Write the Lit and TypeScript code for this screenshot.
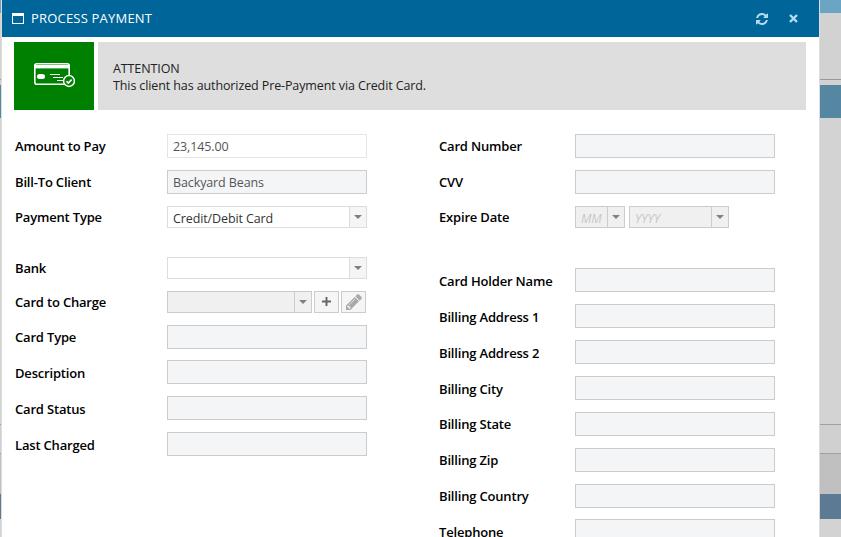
import { LitElement, html, css, svg } from "lit";
import { customElement } from "lit/decorators.js";

const bands = [
  { h: 13, c: "#6aa5c4" },
  { h: 66, c: "#d2d2d2" },
  { h: 1, c: "#999999" },
  { h: 5, c: "#d2d2d2" },
  { h: 33, c: "#5587a3" },
  { h: 306, c: "#d3d3d3" },
  { h: 1, c: "#a0a0a0" },
  { h: 28, c: "#d0d0d0" },
  { h: 1, c: "#a0a0a0" },
  { h: 40, c: "#c0c0c0" },
  { h: 25, c: "#5d7a95" },
  { h: 18, c: "#d3d3d3" },
];

const left = [
  { label: "Amount to Pay", kind: "plain", value: "23,145.00" },
  { label: "Bill-To Client", kind: "locked", value: "Backyard Beans" },
  { label: "Payment Type", kind: "select", value: "Credit/Debit Card" },
  { label: "Bank", kind: "select", value: "", cls: "after-gap" },
  { label: "Card to Charge", kind: "charge", value: "" },
  { label: "Card Type", kind: "locked", value: "" },
  { label: "Description", kind: "locked", value: "" },
  { label: "Card Status", kind: "locked", value: "" },
  { label: "Last Charged", kind: "locked", value: "" },
];

const right = [
  { label: "Card Number", kind: "locked", value: "" },
  { label: "CVV", kind: "locked", value: "" },
  { label: "Expire Date", kind: "expire", value: "" },
  { label: "Card Holder Name", kind: "locked", value: "", cls: "after-gap-wide" },
  { label: "Billing Address 1", kind: "locked", value: "" },
  { label: "Billing Address 2", kind: "locked", value: "" },
  { label: "Billing City", kind: "locked", value: "" },
  { label: "Billing State", kind: "locked", value: "" },
  { label: "Billing Zip", kind: "locked", value: "" },
  { label: "Billing Country", kind: "locked", value: "" },
  { label: "Telephone", kind: "locked", value: "" },
];

const cardIcon = svg`
  <rect x="1.8" y="1.8" width="34.4" height="20.4" rx="2" fill="none" stroke="#fff" stroke-width="1.6"/>
  <rect x="1" y="3" width="36" height="3.4" fill="#fff"/>
  <rect x="4" y="12" width="8" height="5" rx="2.5" fill="#fff"/>
  <path d="M17 12.5h10M20 15.5h10M24 18.5h6" stroke="#fff" stroke-width="1.2" fill="none"/>
  <circle cx="36" cy="19" r="5.4" fill="#008000" stroke="#fff" stroke-width="1.5"/>
  <path d="M33.5 19.2l1.8 1.8 3.3-3.4" stroke="#fff" stroke-width="1.6" fill="none"/>
`;

@customElement("app-root")
export class AppRoot extends LitElement {
  static styles = css`
    :host {
      display: block;
      width: 841px;
      height: 537px;
      overflow: hidden;
      font-family: "Open Sans", "Noto Sans", sans-serif;
      font-size: 12.5px;
      letter-spacing: -0.11px;
      background: #d3d3d3;
    }
    .screen {
      display: flex;
      height: 537px;
    }
    .strip-left {
      width: 2px;
      flex: none;
      display: flex;
      flex-direction: column;
      border-right: 1px solid #dcdcdc;
      box-sizing: border-box;
    }
    .strip-right {
      flex: 1;
      display: flex;
      flex-direction: column;
      border-left: 1px solid #dedede;
    }
    .band {
      flex: none;
    }
    .dialog {
      width: 817px;
      flex: none;
      background: #fff;
      overflow: hidden;
    }
    .titlebar {
      height: 37px;
      background: #006699;
      color: #fff;
      display: flex;
      align-items: center;
      padding: 0 21px 0 10px;
    }
    .titlebar .win {
      margin-right: 7px;
    }
    .titlebar h1 {
      margin: 0 0 2px;
      font-size: 13px;
      font-weight: 400;
      flex: 1;
      letter-spacing: 0.2px;
    }
    .tools {
      display: flex;
      align-items: center;
      gap: 21px;
    }
    .alert {
      display: flex;
      gap: 4px;
      margin: 5px 13px 0 12px;
      height: 68px;
    }
    .alert-icon {
      width: 80px;
      flex: none;
      background: #008000;
      display: flex;
      align-items: center;
      justify-content: center;
    }
    .alert-body {
      flex: 1;
      background: #dedede;
      color: #222;
      padding: 2px 15px 0;
      display: flex;
      flex-direction: column;
      justify-content: center;
      line-height: 17px;
    }
    .form {
      display: flex;
      gap: 72px;
      padding: 23.9px 0 0 13px;
    }
    .col {
      display: flex;
      flex-direction: column;
      gap: 11.85px;
    }
    .col.a {
      width: 352px;
    }
    .col.b {
      width: 336px;
    }
    .row {
      display: flex;
      align-items: center;
    }
    .col.a label {
      width: 152px;
    }
    .col.b label {
      width: 136px;
    }
    label {
      flex: none;
      font-size: 13px;
      font-weight: 600;
      letter-spacing: -0.18px;
      color: #000;
      padding-top: 1px;
    }
    .after-gap {
      margin-top: 17.4px;
    }
    .after-gap-wide {
      margin-top: 29.07px;
    }
    .box {
      box-sizing: border-box;
      width: 200px;
      height: 24px;
      padding: 0 5px;
      line-height: 24px;
      border: 1px solid #cccccc;
      background: #f4f5f7;
      color: #555;
      white-space: nowrap;
    }
    .box.plain {
      background: #fff;
      border-color: #e4e4e4;
    }
    .sel {
      box-sizing: border-box;
      display: flex;
      width: 200px;
      height: 22px;
      border: 1px solid #dddddd;
      background: #fff;
      color: #333;
      line-height: 22px;
    }
    .sel .val {
      flex: 1;
      padding: 1px 0 0 5px;
      white-space: nowrap;
      overflow: hidden;
    }
    .sel .arrow {
      width: 16px;
      flex: none;
      border-left: 1px solid #dddddd;
      background: #f5f5f5;
      display: flex;
      align-items: center;
      justify-content: center;
    }
    .arrow::before {
      content: "";
      border-left: 4px solid transparent;
      border-right: 4px solid transparent;
      border-top: 4px solid #808080;
    }
    .sel.off {
      background: #f0f0f0;
      border-color: #cccccc;
    }
    .sel.off .arrow {
      background: #f0f0f0;
      border-left-color: #cccccc;
    }
    .sel.off .val {
      color: #c8c8c8;
      font-style: italic;
    }
    .sel.charge {
      width: 145px;
    }
    .sel.mm {
      width: 50px;
    }
    .sel.yy {
      width: 100px;
      margin-left: 4px;
    }
    .btn {
      box-sizing: border-box;
      height: 22px;
      width: 25px;
      border: 1px solid #cccccc;
      background: #f5f5f5;
      display: flex;
      align-items: center;
      justify-content: center;
      margin-left: 2px;
    }
  `;

  strip(cls: string) {
    return html`<div class=${cls}>
      ${bands.map((b) => html`<div class="band" style="height:${b.h}px;background:${b.c}"></div>`)}
    </div>`;
  }

  field(f: { kind: string; value: string }) {
    if (f.kind === "plain") return html`<div class="box plain">${f.value}</div>`;
    if (f.kind === "locked") return html`<div class="box">${f.value}</div>`;
    if (f.kind === "select")
      return html`<div class="sel"><span class="val">${f.value}</span><span class="arrow"></span></div>`;
    if (f.kind === "expire")
      return html`
        <div class="sel off mm"><span class="val">MM</span><span class="arrow"></span></div>
        <div class="sel off yy"><span class="val">YYYY</span><span class="arrow"></span></div>
      `;
    return html`
      <div class="sel off charge"><span class="val"></span><span class="arrow"></span></div>
      <div class="btn">
        <svg width="9" height="9" viewBox="0 0 9 9"><path d="M4.5 0v9M0 4.5h9" stroke="#666" stroke-width="1.9"/></svg>
      </div>
      <div class="btn">
        <svg width="16" height="16" viewBox="128 128 1536 1536">
          <path
            fill="#a8a8a8"
            d="M491 1536l91-91-235-235-91 91v107h128v128h107zm523-928q0-22-22-22-10 0-17 7l-542 542q-7 7-7 17 0 22 22 22 10 0 17-7l542-542q7-7 7-17zm-54-192l416 416-832 832h-416v-416zm683 96q0 53-37 90l-166 166-416-416 166-165q36-38 90-38 53 0 91 38l235 234q37 39 37 91z"
          />
        </svg>
      </div>
    `;
  }

  rows(list: { label: string; kind: string; value: string; cls?: string }[]) {
    return list.map(
      (f) => html`<div class="row ${f.cls || ""}"><label>${f.label}</label>${this.field(f)}</div>`
    );
  }

  render() {
    return html`
      <div class="screen">
        ${this.strip("strip-left")}
        <div class="dialog">
          <div class="titlebar">
            <svg class="win" width="12" height="11" viewBox="0 0 12 11">
              <rect x="0.5" y="0.5" width="11" height="10" fill="none" stroke="#fff"/>
              <rect x="0" y="0" width="12" height="3" fill="#fff"/>
            </svg>
            <h1>PROCESS PAYMENT</h1>
            <div class="tools">
              <svg width="12" height="12" viewBox="128 128 1536 1536">
                <path
                  fill="#b5dcf0"
                  d="M1639 1056q0 5-1 7-64 268-268 434.5t-478 166.5q-146 0-282.5-55t-243.5-157l-129 129q-19 19-45 19t-45-19-19-45v-448q0-26 19-45t45-19h448q26 0 45 19t19 45-19 45l-137 137q71 66 161 102t187 36q134 0 250-65t186-179q11-17 53-117 8-23 30-23h192q13 0 22.5 9.5t9.5 22.5zm25-800v448q0 26-19 45t-45 19h-448q-26 0-45-19t-19-45 19-45l138-138q-148-137-349-137-134 0-250 65t-186 179q-11 17-53 117-8 23-30 23h-199q-13 0-22.5-9.5t-9.5-22.5v-7q65-268 270-434.5t480-166.5q146 0 284 55.5t245 156.5l130-129q19-19 45-19t45 19 19 45z"
                />
              </svg>
              <svg width="9" height="9" viewBox="0 0 9 9">
                <path d="M1 1l7 7M8 1l-7 7" stroke="#b5dcf0" stroke-width="2.4"/>
              </svg>
            </div>
          </div>
          <div class="alert">
            <div class="alert-icon">
              <svg width="42" height="28" viewBox="0 0 42 28">${cardIcon}</svg>
            </div>
            <div class="alert-body">
              <div>ATTENTION</div>
              <div>This client has authorized Pre-Payment via Credit Card.</div>
            </div>
          </div>
          <div class="form">
            <div class="col a">${this.rows(left)}</div>
            <div class="col b">${this.rows(right)}</div>
          </div>
        </div>
        ${this.strip("strip-right")}
      </div>
    `;
  }
}
